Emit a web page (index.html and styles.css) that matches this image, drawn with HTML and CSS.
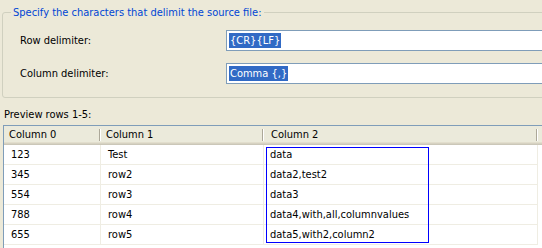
FILE: index.html
```html
<!DOCTYPE html>
<html>
<head>
<meta charset="UTF-8">
<title>Delimited file</title>
<link rel="stylesheet" href="styles.css">
</head>
<body>
<div class="page">
	<fieldset class="group">
		<legend>Specify the characters that delimit the source file:</legend>
		<div class="fields">
			<label>Row delimiter:</label>
			<div class="input"><span class="sel">{CR}{LF}</span></div>
			<label>Column delimiter:</label>
			<div class="input"><span class="sel">Comma {,}</span></div>
		</div>
	</fieldset>

	<div class="preview-label">Preview rows 1-5:</div>

	<div class="grid">
		<div class="head">
			<div class="hcell c0">Column 0</div>
			<div class="hcell c1">Column 1</div>
			<div class="hcell c2">Column 2</div>
			<div class="hcell fill"></div>
		</div>
		<div class="row"><div class="cell c0">123</div><div class="cell c1">Test</div><div class="cell c2">data</div></div>
		<div class="row"><div class="cell c0">345</div><div class="cell c1">row2</div><div class="cell c2">data2,test2</div></div>
		<div class="row"><div class="cell c0">554</div><div class="cell c1">row3</div><div class="cell c2">data3</div></div>
		<div class="row"><div class="cell c0">788</div><div class="cell c1">row4</div><div class="cell c2">data4,with,all,columnvalues</div></div>
		<div class="row"><div class="cell c0">655</div><div class="cell c1">row5</div><div class="cell c2">data5,with2,column2</div></div>
		<div class="focus"></div>
	</div>
</div>
</body>
</html>
```
FILE: styles.css
```css
html, body {
	margin: 0;
	padding: 0;
}

body {
	background: #ECE9D8;
	font-family: "DejaVu Sans Condensed", "Liberation Sans", Arial, sans-serif;
	font-size: 11px;
	color: #000;
	overflow: hidden;
	width: 542px;
	height: 248px;
}

.page {
	width: 560px;
}

/* group box */
.group {
	margin: 6px 0 0 2px;
	padding: 0 0 13px 17px;
	border: 1px solid #D0D0BF;
	border-radius: 3px;
}

.group legend {
	color: #0046D5;
	padding: 0 2px;
	margin-left: -9px;
	line-height: 13px;
}

.fields {
	display: grid;
	grid-template-columns: 206px 1fr;
	row-gap: 12px;
	align-items: center;
	margin-top: 11px;
}

.input {
	height: 19px;
	border: 1px solid #7F9DB9;
	background: #fff;
	display: flex;
	align-items: center;
	padding-left: 2px;
}

.sel {
	background: #316AC5;
	color: #fff;
	line-height: 15px;
	padding: 0 1px;
}

.preview-label {
	margin: 10px 0 4px 4px;
	line-height: 13px;
}

/* preview table */
.grid {
	position: relative;
	margin-left: 3px;
	border-left: 1px solid #7F9DB9;
	border-top: 1px solid #7F9DB9;
	background: #fff;
	height: 122px;
}

.head {
	display: flex;
	height: 19px;
	background: #EBEADB;
	box-shadow: inset 0 -1px #CBC7B8, inset 0 -2px #D6D2C2, inset 0 -3px #E2DECD;
}

.hcell {
	line-height: 18px;
	padding-left: 5px;
	box-sizing: border-box;
	background:
		linear-gradient(#ACA899, #ACA899) right 1px top 3px / 1px 12px no-repeat,
		linear-gradient(#fff, #fff) right 0 top 3px / 1px 12px no-repeat;
}

.hcell.fill {
	flex: 1;
	background: none;
}

.c0 { width: 97px; }
.c1 { width: 163px; }
.c2 { width: 274px; }

.hcell.c2 { padding-left: 7px; }

.row {
	display: flex;
	height: 20px;
}

.cell {
	box-sizing: border-box;
	height: 20px;
	line-height: 19px;
	padding-left: 7px;
	border-right: 1px solid #EFEDE3;
	border-bottom: 1px solid #EFEDE3;
}

.cell.c2 { padding-left: 6px; }

.focus {
	position: absolute;
	left: 262px;
	top: 21px;
	width: 161px;
	height: 94px;
	border: 1px solid #0000FF;
}
```
